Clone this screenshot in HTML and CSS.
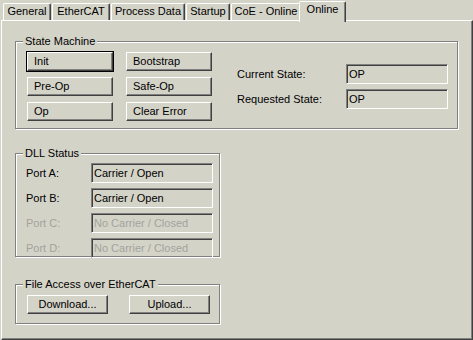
FILE: index.html
```html
<!DOCTYPE html>
<html>
  <head>
    <link rel="stylesheet" href="styles.css">
  </head>
  <body>
    <div class="tabs">
      <div class="tab tab-general">General</div>
      <div class="tab tab-ethercat">EtherCAT</div>
      <div class="tab tab-process">Process Data</div>
      <div class="tab tab-startup">Startup</div>
      <div class="tab tab-coe">CoE - Online</div>
      <div class="tab tab-online active">Online</div>
    </div>

    <div class="panel">
      <div class="group group-state">
        <span class="group-title">State Machine</span>
        <div class="state-body">
          <div class="state-buttons">
            <button class="btn btn-left default">Init</button>
            <button class="btn btn-left">Bootstrap</button>
            <button class="btn btn-left">Pre-Op</button>
            <button class="btn btn-left">Safe-Op</button>
            <button class="btn btn-left">Op</button>
            <button class="btn btn-left">Clear Error</button>
          </div>
          <div class="state-fields">
            <span class="label">Current State:</span>
            <div class="field">OP</div>
            <span class="label">Requested State:</span>
            <div class="field">OP</div>
          </div>
        </div>
      </div>

      <div class="group group-dll">
        <span class="group-title">DLL Status</span>
        <div class="dll-body">
          <span class="label">Port A:</span>
          <div class="field">Carrier / Open</div>
          <span class="label">Port B:</span>
          <div class="field">Carrier / Open</div>
          <span class="label disabled">Port C:</span>
          <div class="field disabled">No Carrier / Closed</div>
          <span class="label disabled">Port D:</span>
          <div class="field disabled">No Carrier / Closed</div>
        </div>
      </div>

      <div class="group group-file">
        <span class="group-title">File Access over EtherCAT</span>
        <div class="file-body">
          <button class="btn">Download...</button>
          <button class="btn">Upload...</button>
        </div>
      </div>
    </div>
  </body>
</html>
```

FILE: styles.css
```css
* {
  box-sizing: border-box;
}

body {
  margin: 0;
  width: 473px;
  height: 340px;
  overflow: hidden;
  background: #d4d3c8;
  color: #000;
  font: 11px/13px "Liberation Sans", Arial, sans-serif;
}

/* tab strip */
.tabs {
  display: flex;
  align-items: flex-end;
  height: 20px;
  padding-left: 3px;
}

.tab {
  height: 17px;
  margin-right: 1px;
  padding-top: 1px;
  text-align: center;
  white-space: nowrap;
  border: 1px solid;
  border-bottom: 0;
  border-color: #fff #404040 transparent #fff;
  border-radius: 2px 2px 0 0;
  box-shadow: inset -1px 0 #808080;
}

.tab-general { width: 48px; }
.tab-ethercat { width: 58px; }
.tab-process { width: 74px; }
.tab-startup { width: 44px; }
.tab-coe { width: 70px; }
.tab-online { width: 47px; }

.tab.active {
  position: relative;
  z-index: 1;
  height: 21px;
  margin: 0 0 -2px -3px;
  background: #d4d3c8;
}

/* page panel */
.panel {
  margin-left: 1px;
  width: 472px;
  height: 320px;
  padding: 20px 0 0 13px;
  border: 1px solid;
  border-color: #fff #404040 #404040 #fff;
  box-shadow: inset -1px -1px #808080;
}

/* etched group box */
.group {
  position: relative;
  border: 1px solid #808080;
  box-shadow: 1px 1px #fff, inset 1px 1px #fff;
}

.group-title {
  position: absolute;
  top: -7px;
  left: 7px;
  padding: 0 2px;
  background: #d4d3c8;
  white-space: nowrap;
}

.group-state {
  width: 443px;
  height: 88px;
}

.group-dll {
  width: 205px;
  height: 104px;
  margin-top: 24px;
}

.group-file {
  width: 205px;
  height: 40px;
  margin-top: 27px;
}

/* buttons */
.btn {
  display: block;
  margin: 0;
  padding: 0;
  height: 19px;
  font: inherit;
  color: #000;
  text-align: center;
  background: #d4d3c8;
  border: 1px solid;
  border-color: #fff #404040 #404040 #fff;
  box-shadow: inset -1px -1px #808080;
}

.btn-left {
  text-align: left;
  padding-left: 6px;
}

.btn.default {
  outline: 1px solid #000;
}

/* sunken read-only fields */
.field {
  height: 20px;
  padding-left: 2px;
  line-height: 18px;
  white-space: nowrap;
  border: 1px solid;
  border-color: #808080 #fff #fff #808080;
  box-shadow: inset 1px 1px #404040;
}

.disabled {
  color: #a3a39c;
}

/* state machine */
.state-body {
  display: flex;
  align-items: center;
  padding: 10px 0 0 11px;
}

.state-buttons {
  display: grid;
  grid-template-columns: 86px 86px;
  column-gap: 13px;
  row-gap: 6px;
}

.state-fields {
  display: grid;
  grid-template-columns: 109px 102px;
  row-gap: 5px;
  align-items: center;
  margin-left: 25px;
}

/* dll status */
.dll-body {
  display: grid;
  grid-template-columns: 65px 122px;
  row-gap: 5px;
  align-items: center;
  padding: 9px 0 0 10px;
}

/* file access */
.file-body {
  display: flex;
  gap: 21px;
  padding: 10px 0 0 11px;
}

.file-body .btn {
  width: 81px;
}
```
